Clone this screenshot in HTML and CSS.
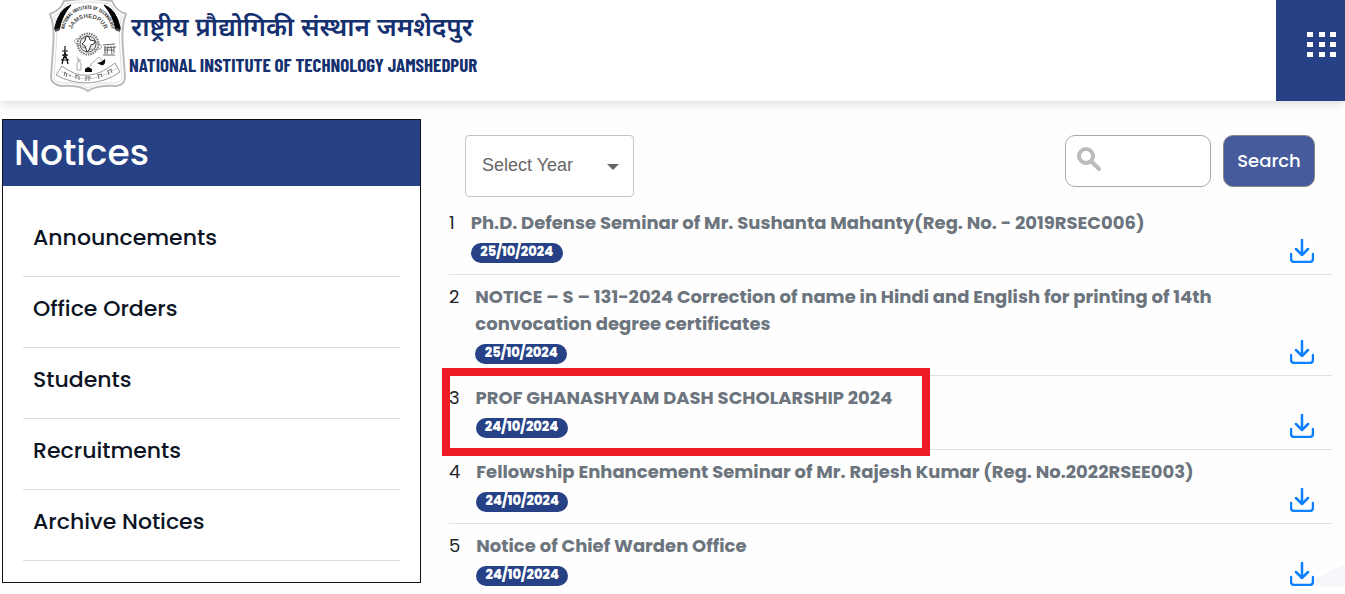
FILE: index.html
```html
<!DOCTYPE html>
<html lang="en">
  <head>
    <meta charset="UTF-8" />
    <meta name="viewport" content="width=device-width, initial-scale=1.0" />
    <title>Notices - NIT Jamshedpur</title>
    <link rel="stylesheet" href="styles.css">
  </head>
  <body>
    <svg class="sprite" aria-hidden="true">
      <symbol id="download" viewBox="0 0 24 24">
        <path d="M12 1v15M6 10l6 6 6-6M1 15v5a3 3 0 0 0 3 3h16a3 3 0 0 0 3-3v-5" fill="none" stroke="currentColor" stroke-width="2.500" stroke-linecap="round" stroke-linejoin="round" />
      </symbol>
    </svg>

    <header class="header">
      <a class="brand" href="#">
        <svg class="crest" viewBox="0 0 78 92" aria-hidden="true">
          <path d="M15 1Q39-3 63 1Q67 11 77 14Q72 25 74 50Q75 65 76 77Q76 85 67 86Q48 85 39 91Q31 85 12 86Q2 84 2 77Q3 64 4 49Q6 25 1 14Q12 10 15 1Z" fill="#fff" stroke="#bbb" stroke-width="2" />
          <path d="M17 4Q39 0 61 4Q65 12 73 16Q69 28 71 50Q72 66 73 77Q72 83 64 83Q47 82 39 88Q31 82 14 83Q5 82 5 77Q6 65 7 50Q9 27 5 16Q14 12 17 4Z" fill="none" stroke="#ddd" />
          <path d="M22 5Q10 9 6 27Q5 32 10 30Q13 15 22 5ZM55 5Q67 9 71 27Q72 32 67 30Q64 15 55 5Z" fill="#050505" stroke="#050505" />
          <path d="M6 31l4-2M71 31l-4-2" stroke="#555" stroke-width="2" />
          <path id="arc1" d="M15 33A24 24 0 0 1 63 33" fill="none" />
          <path id="arc2" d="M22 34A17 16 0 0 1 56 34" fill="none" />
          <text class="crest-text"><textPath href="#arc1" startOffset="50%">NATIONAL INSTITUTE OF TECHNOLOGY</textPath></text>
          <text class="crest-name"><textPath href="#arc2" startOffset="50%">JAMSHEDPUR</textPath></text>
          <circle cx="39" cy="44" r="10.500" fill="#eee" stroke="#777" stroke-width="2" stroke-dasharray="1.500 1" />
          <circle cx="39" cy="44" r="8" fill="none" stroke="#555" />
          <ellipse cx="39" cy="44" rx="14" ry="4.500" transform="rotate(14 39 44)" fill="none" stroke="#888" stroke-width=".8" />
          <path d="M37 36l3 1 1 3 5 1-1 3-3 1-2 5-2 2-2-6-3-2 3-3Z" fill="#fff" stroke="#333" />
          <path d="M16 46v6l-3 12M16 52l3 12M13 51h6M13 55h6M12 60h8M14 55l5 5M18 55l-5 5" fill="none" stroke="#111" stroke-width="1.200" />
          <path d="M54 45l12-1M55 48l12-1M56 46v8M59 46l-1 8M62 46l1 8M65 46v7M54 55h12M55 50h10" fill="none" stroke="#666" />
          <path d="M28 57l2 3-2 4v6h4v-6l-2-4M28 60h4M41 65l9-8 4 5M39 68l4-3" fill="none" stroke="#aaa" />
          <path d="M48 63q5-1 8-4q1 7-4 6ZM36 69l3-2 4 2v3h-7Z" fill="#080808" />
          <path d="M13 66Q38 86 66 63L71 72Q57 82 39 83Q21 83 7 75Z" fill="#fff" stroke="#999" />
          <path d="M12 71Q39 88 68 68" fill="none" stroke="#bbb" stroke-width=".7" />
          <path d="M15 72l3 2M16 72l-1 4M18 73l-1 4M20 75l2 1M26 75l4 1M27 75v4M30 76v4M36 77h6M37 77v4M40 77v4M48 75l5-1M49 75l1 4M52 74l1 3M58 71l5-2M59 71l1 4M62 70l1 3" stroke="#777" />
        </svg>
        <span class="brand-names">
          <span class="brand-hindi" lang="hi">राष्ट्रीय प्रौद्योगिकी संस्थान जमशेदपुर</span>
          <span class="brand-english">NATIONAL INSTITUTE OF TECHNOLOGY JAMSHEDPUR</span>
        </span>
      </a>
      <button class="menu-button" type="button" aria-label="Menu">
        <svg width="30" height="28" viewBox="0 0 30 28" fill="currentColor" aria-hidden="true">
          <path d="M0 1h6v5H0zM12 1h6v5h-6zM23 1h6v5h-6zM0 11h6v5H0zM12 11h6v5h-6zM23 11h6v5h-6zM0 21h6v5H0zM12 21h6v5h-6zM23 21h6v5h-6z" />
        </svg>
      </button>
    </header>

    <div class="page">
      <nav class="sidebar">
        <h1 class="sidebar-title">Notices</h1>
        <ul class="sidebar-list">
          <li><a href="#">Announcements</a></li>
          <li><a href="#">Office Orders</a></li>
          <li><a href="#">Students</a></li>
          <li><a href="#">Recruitments</a></li>
          <li><a href="#">Archive Notices</a></li>
        </ul>
      </nav>

      <main class="content">
        <form class="filters">
          <div class="year">
            <select class="year-select" aria-label="Select Year">
              <option>Select Year</option>
              <option>2024</option>
              <option>2023</option>
            </select>
            <svg class="year-arrow" width="12" height="6" viewBox="0 0 12 6" aria-hidden="true"><path d="M0 0h12L6 6z" fill="#666" /></svg>
          </div>
          <div class="search">
            <svg class="search-icon" width="24" height="24" viewBox="0 0 24 24" aria-hidden="true">
              <circle cx="9" cy="9" r="7" fill="none" stroke="#bbb" stroke-width="4" />
              <path d="M14 14l8 8" stroke="#bbb" stroke-width="4" stroke-linecap="round" />
            </svg>
            <input class="search-input" type="text" aria-label="Search notices" />
          </div>
          <button class="search-button" type="button">Search</button>
        </form>

        <ul class="notices">
          <li class="notice">
            <span class="number">1</span>
            <div class="notice-body">
              <a class="notice-title" href="#">Ph.D. Defense Seminar of Mr. Sushanta Mahanty(Reg. No. - 2019RSEC006)</a>
              <span class="date">25/10/2024</span>
            </div>
            <a class="download" href="#" aria-label="Download"><svg width="24" height="24"><use href="#download" /></svg></a>
          </li>
          <li class="notice">
            <span class="number">2</span>
            <div class="notice-body">
              <a class="notice-title" href="#">NOTICE – S – 131-2024 Correction of name in Hindi and English for printing of 14th convocation degree certificates</a>
              <span class="date">25/10/2024</span>
            </div>
            <a class="download" href="#" aria-label="Download"><svg width="24" height="24"><use href="#download" /></svg></a>
          </li>
          <li class="notice highlighted">
            <span class="number">3</span>
            <div class="notice-body">
              <a class="notice-title" href="#">PROF GHANASHYAM DASH SCHOLARSHIP 2024</a>
              <span class="date">24/10/2024</span>
            </div>
            <a class="download" href="#" aria-label="Download"><svg width="24" height="24"><use href="#download" /></svg></a>
          </li>
          <li class="notice">
            <span class="number">4</span>
            <div class="notice-body">
              <a class="notice-title" href="#">Fellowship Enhancement Seminar of Mr. Rajesh Kumar (Reg. No.2022RSEE003)</a>
              <span class="date">24/10/2024</span>
            </div>
            <a class="download" href="#" aria-label="Download"><svg width="24" height="24"><use href="#download" /></svg></a>
          </li>
          <li class="notice">
            <span class="number">5</span>
            <div class="notice-body">
              <a class="notice-title" href="#">Notice of Chief Warden Office</a>
              <span class="date">24/10/2024</span>
            </div>
            <a class="download" href="#" aria-label="Download"><svg width="24" height="24"><use href="#download" /></svg></a>
          </li>
        </ul>
        <div class="corner"></div>
      </main>
    </div>
  </body>
</html>
```

FILE: styles.css
```css
*,
*::after {
  box-sizing: border-box;
}
body {
  margin: 0;
  font-family: Poppins, Inter, sans-serif;
  background-color: #fefefe;
  color: #212529;
}
ul {
  list-style: none;
  margin: 0;
  padding: 0;
}
a {
  color: inherit;
  text-decoration: none;
}
button {
  font-family: inherit;
  cursor: pointer;
}
.sprite {
  display: none;
}

/* Header */
.header {
  display: flex;
  justify-content: space-between;
  height: 101px;
  background-color: #fff;
  box-shadow: 0 2px 10px rgba(0, 0, 0, 0.15);
}
.brand {
  display: flex;
  align-items: flex-start;
  gap: 2px;
  padding-left: 49px;
  color: #14306f;
}
.crest {
  width: 78px;
  height: 92px;
}
.crest-text {
  font: bold 5px "Barlow Condensed", "Roboto Condensed", sans-serif;
  fill: #444;
  text-anchor: middle;
}
.crest-name {
  font: bold 6px "Liberation Sans", sans-serif;
  fill: #555;
  text-anchor: middle;
}
.brand-names {
  display: flex;
  flex-direction: column;
  padding-top: 10px;
  white-space: nowrap;
}
.brand-hindi {
  padding-left: 2px;
  font-family: "Noto Sans Devanagari", "Noto Sans", sans-serif;
  font-size: 26px;
  font-weight: 600;
  line-height: 40px;
}
.brand-english {
  font-family: "Barlow Condensed", "Liberation Sans Narrow", "Roboto Condensed", "Liberation Sans", sans-serif;
  font-size: 19px;
  font-weight: 700;
  line-height: 30px;
}
.menu-button {
  width: 69px;
  padding: 0 0 5px 22px;
  border: none;
  background-color: #264185;
  color: #fff;
}

.page {
  display: grid;
  grid-template-columns: 31.5% 1fr;
  gap: 28px;
  padding: 18px 13px 0 2px;
}

/* Sidebar */
.sidebar {
  align-self: start;
  padding-bottom: 21px;
  border: 1px solid #111;
  background-color: #fff;
}
.sidebar-title {
  margin: 0;
  padding: 0 11px;
  background-color: #264185;
  color: #fff;
  font-size: 36px;
  font-weight: 500;
  line-height: 66px;
}
.sidebar-list {
  padding: 20px 20px 0;
}
.sidebar-list a {
  display: block;
  padding: 0 10px 6px;
  border-bottom: 1px solid #ddd;
  color: #0c1424;
  font-size: 22px;
  font-weight: 500;
  line-height: 64px;
}

/* Filters */
.content {
  position: relative;
  min-width: 0;
}
.filters {
  display: flex;
  align-items: flex-start;
  gap: 12px;
  padding: 16px 17px 4px 16px;
}
.year {
  position: relative;
  margin-right: auto;
}
.year-select {
  width: 169px;
  height: 62px;
  padding: 0 16px 2px;
  appearance: none;
  border: 1px solid #c4c4c4;
  border-radius: 4px;
  background-color: #fff;
  color: #666;
  font-family: "Liberation Sans", sans-serif;
  font-size: 18px;
}
.year-arrow {
  position: absolute;
  top: 29px;
  right: 15px;
  pointer-events: none;
}
.search {
  position: relative;
}
.search-input {
  display: block;
  width: 146px;
  height: 52px;
  padding: 0 12px 0 44px;
  border: 1px solid #aaa;
  border-radius: 10px;
  background-color: #fff;
  font-size: 18px;
}
.search-icon {
  position: absolute;
  top: 12px;
  left: 12px;
}
.search-button {
  width: 92px;
  height: 52px;
  padding: 0 0 2px;
  border: 1px solid #888;
  border-radius: 10px;
  background-color: #465b9b;
  color: #fff;
  font-size: 18px;
  font-weight: 500;
}

/* Notices */
.notice {
  position: relative;
  display: flex;
  gap: 16px;
  padding: 8px 18px 11px 0;
  border-bottom: 1px solid #dee2e6;
}
.notice:last-child {
  padding-bottom: 0;
  border-bottom: none;
}
.number {
  font-size: 18px;
  line-height: 27px;
}
.notice-body {
  flex: 1;
}
.notice-title {
  display: block;
  color: #6c757d;
  font-size: 18px;
  font-weight: 700;
  line-height: 27px;
}
.date {
  display: block;
  width: 92px;
  height: 20px;
  margin-top: 7px;
  border-radius: 10px;
  background-color: #264185;
  color: #fff;
  font-size: 13px;
  font-weight: 800;
  line-height: 17px;
  text-align: center;
}
.download {
  align-self: flex-end;
  height: 24px;
  color: #0d80ff;
}
.download svg {
  overflow: visible;
}
/* marker frame over the selected notice */
.highlighted::after {
  content: "";
  position: absolute;
  top: -8px;
  bottom: -7px;
  left: -7px;
  width: 488px;
  border: 8px solid #ed1c24;
}
.corner {
  position: absolute;
  right: -13px;
  bottom: -5px;
  z-index: -1;
  width: 34px;
  height: 27px;
  background-color: #f6f7fd;
  clip-path: polygon(100% 0, 100% 100%, 0 100%, 0 60%);
}
```
